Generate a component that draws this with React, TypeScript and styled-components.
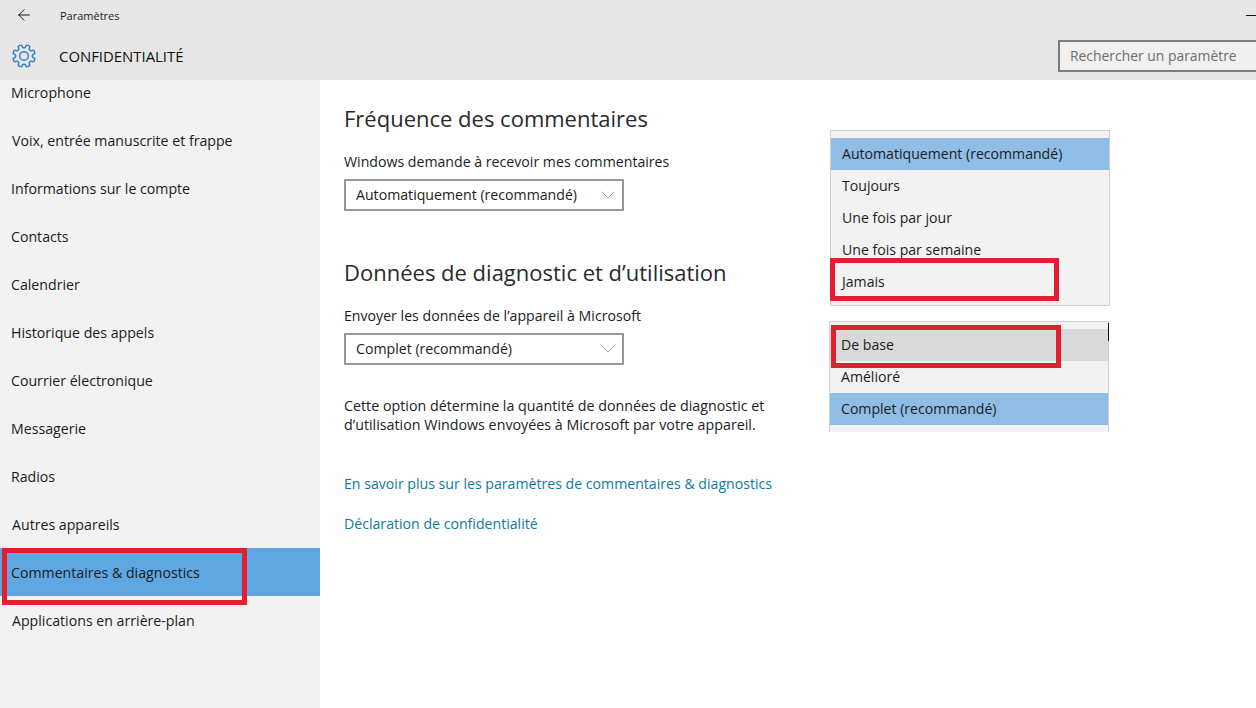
import React from "react";
import styled, { createGlobalStyle } from "styled-components";
import { ArrowLeft, ChevronDown } from "lucide-react";

const Global = createGlobalStyle`
  html, body { margin: 0; padding: 0; background: #fff; }
  body { font-family: "Open Sans", "Noto Sans", "Liberation Sans", sans-serif; color: #1a1a1a; }
  * { box-sizing: border-box; }
`;
const Page = styled.div`
  width: 1256px; height: 708px; display: flex; flex-direction: column; overflow: hidden; position: relative;
`;
const Header = styled.header`
  height: 80px; background: #e6e6e6; display: flex; flex-direction: column; flex: none;
`;
const TitleBar = styled.div`
  height: 32px; display: flex; align-items: center; padding-left: 15px; position: relative; padding-bottom: 2px;
`;
const Back = styled.span`
  width: 45px; display: flex; color: #111;
`;
const AppName = styled.span`
  font-size: 11px; color: #222;
`;
const Minimize = styled.span`
  position: absolute; right: 0; top: 15px; width: 10px; height: 1px; background: #111;
`;
const PageBar = styled.div`
  flex: 1; display: flex; align-items: center; padding: 0 0 0 12px; margin-top: -2px;
`;
const Gear = styled.span`
  width: 47px; display: flex; color: #2f80c4; margin-top: 2px;
`;
const PageTitle = styled.h1`
  margin: 2px 0 0; flex: 1; font-size: 14.9px; font-weight: 500; color: #111;
`;
const Search = styled.div`
  width: 198px; height: 32px; margin-top: 2px; border: 2px solid #7d7d7d; border-right: 0; background: #f0f0f0;
  color: #6e6e6e; font-size: 13.9px; display: flex; align-items: center; padding: 0 0 2px 10px;
`;
const Body = styled.div`
  flex: 1; display: flex; min-height: 0;
`;
const Side = styled.nav`
  width: 320px; background: #f2f2f2; overflow: hidden; flex: none;
`;
const SideList = styled.div`
  margin-top: -12px; display: flex; flex-direction: column;
`;
const SideItem = styled.div<{ $active?: boolean; $x?: number }>`
  height: 48px; padding-left: ${p => p.$x ?? 12}px; display: flex; align-items: center; font-size: 14.17px; position: relative;
  background: ${p => (p.$active ? "#5fa7e3" : "transparent")};
  color: #1b1b1b;
`;
const Mark = styled.span<{ $l: number; $t: number; $w: number; $h: number }>`
  position: absolute; left: ${p => p.$l}px; top: ${p => p.$t}px; width: ${p => p.$w}px; height: ${p => p.$h}px;
  border: 5px solid #e0202e; pointer-events: none;
`;
const Main = styled.main`
  flex: 1; padding: 22px 0 0 24px; position: relative; background: #fff;
`;
const Heading = styled.h2<{ $top?: number }>`
  margin: ${p => p.$top ?? 0}px 0 0; font-size: 22px; line-height: 32px; font-weight: 400; color: #2a2a2a;
`;
const Label = styled.div<{ $top: number }>`
  margin-top: ${p => p.$top}px; font-size: 14.15px; line-height: 20px; color: #1c1c1c;
`;
const Select = styled.div<{ $top: number }>`
  margin-top: ${p => p.$top}px; width: 280px; height: 32px; border: 2px solid #999; display: flex; align-items: center; justify-content: space-between;
  padding: 0 2px 0 10px; font-size: 14.15px; color: #222; background: #fff;
`;
const SelectText = styled.span`
  margin-top: -2px;
`;
const Chevron = styled.span`
  display: flex; color: #888;
`;
const Paragraph = styled.p`
  margin: 31px 0 0; width: 440px; font-size: 14.27px; line-height: 19px; color: #222;
`;
const Anchor = styled.a<{ $top: number }>`
  display: block; margin-top: ${p => p.$top}px; font-size: 14.13px; line-height: 20px; color: #0f7a9e; text-decoration: none;
`;
const Popup = styled.div<{ $l: number; $t: number; $h: number; $open?: boolean }>`
  position: absolute; left: ${p => p.$l}px; top: ${p => p.$t}px; width: 280px; height: ${p => p.$h}px;
  background: #f2f2f2; border: 1px solid #cfcfcf; ${p => (p.$open ? "border-bottom: 0;" : "")} padding-top: 7px;
`;
const Option = styled.div<{ $state?: "selected" | "hover" }>`
  height: 32px; display: flex; align-items: center; padding: 0 0 2px 11px; font-size: 14.1px; color: #1c1c1c;
  background: ${p => (p.$state === "selected" ? "#90bde5" : p.$state === "hover" ? "#d9d9d9" : "transparent")};
`;
const Tick = styled.span`
  position: absolute; right: -1px; top: 1px; width: 1px; height: 18px; background: #111;
`;

const gearPath = (() => {
  const teeth = 8, cx = 12, cy = 12, ro = 11.2, ri = 8.6;
  const pt = (r: number, a: number) => `${(cx + r * Math.cos(a)).toFixed(2)} ${(cy + r * Math.sin(a)).toFixed(2)}`;
  const step = (Math.PI * 2) / teeth;
  let d = "";
  for (let i = 0; i < teeth; i++) {
    const a = i * step - Math.PI / 2 + step / 2;
    d += `${i === 0 ? "M" : "L"}${pt(ri, a - step * 0.32)} `;
    d += `L${pt(ro, a - step * 0.2)} Q${pt(ro + 0.5, a)} ${pt(ro, a + step * 0.2)} L${pt(ri, a + step * 0.32)} `;
    d += `Q${pt(ri - 0.6, a + step * 0.5)} ${pt(ri, a + step * 0.68)} `;
  }
  return d + "Z";
})();

const GearIcon = () => (
  <svg width="24" height="24" viewBox="0 0 24 24" fill="none" stroke="currentColor" strokeWidth="1.4" strokeLinejoin="round">
    <path d={gearPath} />
    <circle cx="12" cy="12" r="4.3" />
  </svg>
);

const sideItems: [string, number][] = [
  ["Microphone", 11], ["Voix, entrée manuscrite et frappe", 12], ["Informations sur le compte", 11], ["Contacts", 11],
  ["Calendrier", 11], ["Historique des appels", 11], ["Courrier électronique", 11], ["Messagerie", 11], ["Radios", 11],
  ["Autres appareils", 12],
];

export default function App() {
  return (
    <Page>
      <Global />
      <Header>
        <TitleBar>
          <Back><ArrowLeft size={18} strokeWidth={1.3} /></Back>
          <AppName>Paramètres</AppName>
          <Minimize />
        </TitleBar>
        <PageBar>
          <Gear><GearIcon /></Gear>
          <PageTitle>CONFIDENTIALITÉ</PageTitle>
          <Search>Rechercher un paramètre</Search>
        </PageBar>
      </Header>
      <Body>
        <Side>
          <SideList>
            {sideItems.map(([t, x]) => <SideItem key={t} $x={x}>{t}</SideItem>)}
            <SideItem $active $x={11}>Commentaires &amp; diagnostics</SideItem>
            <SideItem $x={12}>Applications en arrière-plan</SideItem>
          </SideList>
        </Side>
        <Main>
          <Heading>Fréquence des commentaires</Heading>
          <Label $top={18}>Windows demande à recevoir mes commentaires</Label>
          <Select $top={7}><SelectText>Automatiquement (recommandé)</SelectText><Chevron><ChevronDown size={24} strokeWidth={0.8} /></Chevron></Select>
          <Heading $top={45}>Données de diagnostic et d’utilisation</Heading>
          <Label $top={18}>Envoyer les données de l’appareil à Microsoft</Label>
          <Select $top={7}><SelectText>Complet (recommandé)</SelectText><Chevron><ChevronDown size={24} strokeWidth={0.8} /></Chevron></Select>
          <Paragraph>Cette option détermine la quantité de données de diagnostic et d’utilisation Windows envoyées à Microsoft par votre appareil.</Paragraph>
          <Anchor $top={40}>En savoir plus sur les paramètres de commentaires &amp; diagnostics</Anchor>
          <Anchor $top={20}>Déclaration de confidentialité</Anchor>
          <Popup $l={510} $t={50} $h={176}>
            <Option $state="selected">Automatiquement (recommandé)</Option>
            <Option>Toujours</Option>
            <Option>Une fois par jour</Option>
            <Option>Une fois par semaine</Option>
            <Option>Jamais</Option>
          </Popup>
          <Popup $l={509} $t={241} $h={111} $open>
            <Option $state="hover">De base</Option>
            <Option>Amélioré</Option>
            <Option $state="selected">Complet (recommandé)</Option>
            <Tick />
          </Popup>
          <Mark $l={510} $t={178} $w={229} $h={43} />
          <Mark $l={511} $t={245} $w={230} $h={43} />
          <Mark $l={-318} $t={468} $w={245} $h={57} />
        </Main>
      </Body>
    </Page>
  );
}
